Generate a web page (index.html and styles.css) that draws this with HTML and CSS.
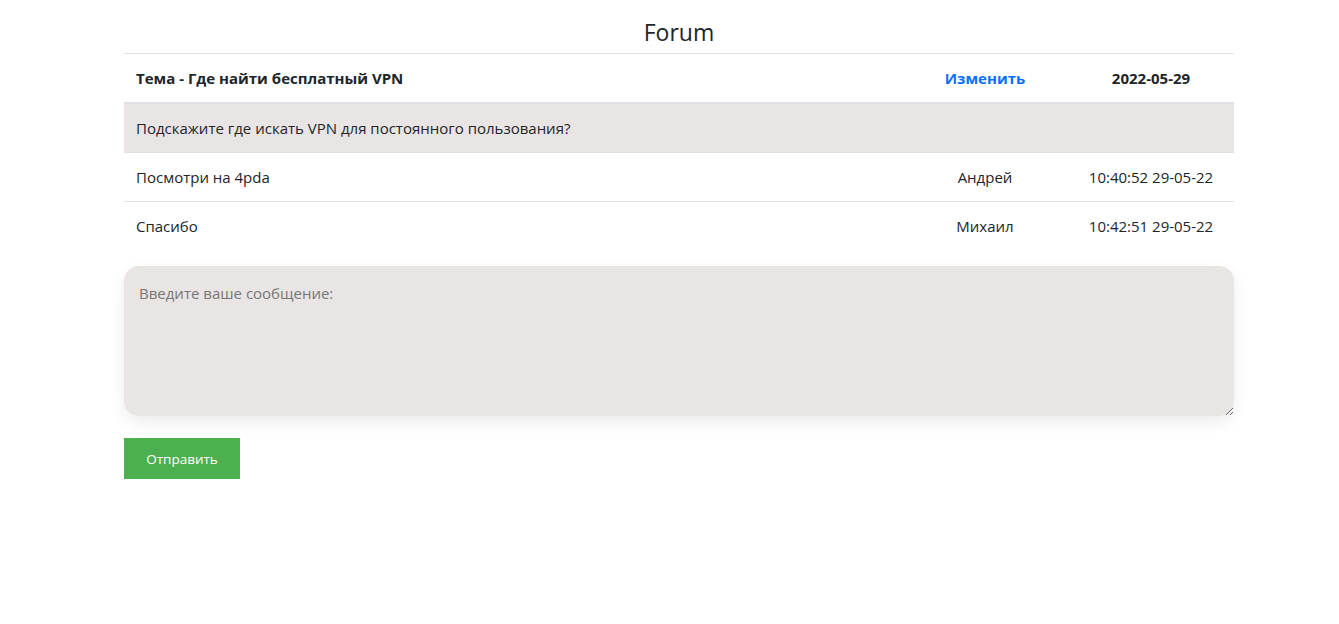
FILE: index.html
```html
<!DOCTYPE html>
<html lang="ru">
<head>
<meta charset="utf-8">
<title>Forum</title>
<link rel="stylesheet" href="styles.css">
</head>
<body>
<div class="container">
  <h1 class="title">Forum</h1>
  <table class="forum">
    <thead>
      <tr class="head">
        <th class="c-text">Тема - Где найти бесплатный VPN</th>
        <th class="c-author"><a href="#" class="edit">Изменить</a></th>
        <th class="c-date">2022-05-29</th>
      </tr>
    </thead>
    <tbody>
      <tr class="question">
        <td colspan="3">Подскажите где искать VPN для постоянного пользования?</td>
      </tr>
      <tr>
        <td class="c-text">Посмотри на 4pda</td>
        <td class="c-author">Андрей</td>
        <td class="c-date">10:40:52 29-05-22</td>
      </tr>
      <tr>
        <td class="c-text">Спасибо</td>
        <td class="c-author">Михаил</td>
        <td class="c-date">10:42:51 29-05-22</td>
      </tr>
    </tbody>
  </table>
  <form class="reply">
    <textarea class="message" placeholder="Введите ваше сообщение:"></textarea>
    <button type="button" class="send">Отправить</button>
  </form>
</div>
</body>
</html>
```

FILE: styles.css
```css
html, body {
  margin: 0;
  padding: 0;
  background: #fff;
}
body {
  font-family: "Open Sans", "Noto Sans", sans-serif;
  font-size: 15px;
  color: #212529;
}
.container {
  width: 1110px;
  margin: 0 0 0 124px;
  padding-top: 14px;
}
.title {
  margin: 0;
  text-align: center;
  font-size: 23px;
  font-weight: 500;
  line-height: 36px;
  height: 39px;
}
.forum {
  width: 100%;
  border-collapse: collapse;
}
.forum th, .forum td {
  padding: 12px;
  line-height: 24px;
  border-top: 1px solid #dee2e6;
  text-align: left;
  vertical-align: top;
}
.forum th {
  font-weight: 700;
  font-size: 15px;
}
.forum .c-author, .forum .c-date {
  width: 142px;
  text-align: center;
}
.forum .head th {
  border-bottom: 2px solid #dee2e6;
}
.edit {
  color: #0d6efd;
  text-decoration: none;
}
.question td {
  background: #e9e5e5;
}
.reply {
  margin-top: 16px;
  display: flex;
  flex-direction: column;
  align-items: flex-start;
  gap: 22px;
}
.message {
  box-sizing: border-box;
  width: 100%;
  height: 150px;
  background: #e9e5e4;
  border: none;
  border-radius: 15px;
  padding: 17px 15px;
  font-family: "Open Sans", "Noto Sans", sans-serif;
  font-size: 15px;
  color: #212529;
  box-shadow: 0 6px 16px rgba(0, 0, 0, 0.08);
  outline: none;
  resize: vertical;
}
.message::placeholder {
  color: #777;
}
.send {
  background: #4caf50;
  color: #fff;
  border: none;
  width: 116px;
  height: 41px;
  font-family: "Open Sans", "Noto Sans", sans-serif;
  font-size: 13.5px;
  cursor: pointer;
}
```
